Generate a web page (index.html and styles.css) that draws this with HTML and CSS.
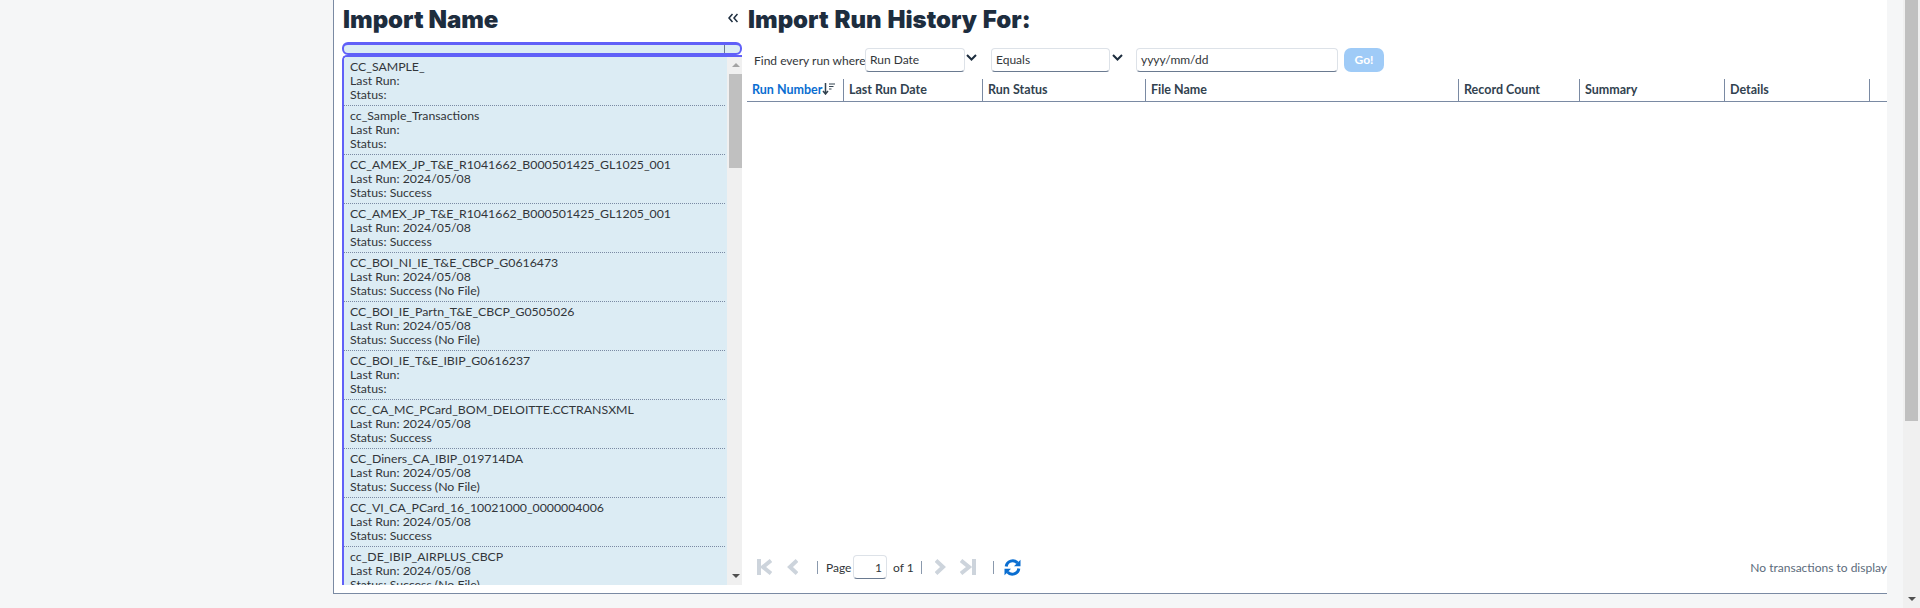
FILE: index.html
```html
<!DOCTYPE html>
<html>
<head>
	<meta charset="utf-8">
	<title>Import Run History</title>
	<link rel="stylesheet" href="styles.css">
</head>
<body>
	<div class="panel">
		<div class="left">
			<div class="pane_title name_title">Import Name</div>
			<div class="search"><span class="tick"></span></div>
			<div class="list_wrap">
				<div class="list">
					<div class="row"><div>CC_SAMPLE_</div><div>Last Run:</div><div>Status:</div></div>
					<div class="row"><div>cc_Sample_Transactions</div><div>Last Run:</div><div>Status:</div></div>
					<div class="row"><div>CC_AMEX_JP_T&amp;E_R1041662_B000501425_GL1025_001</div><div>Last Run: 2024/05/08</div><div>Status: Success</div></div>
					<div class="row"><div>CC_AMEX_JP_T&amp;E_R1041662_B000501425_GL1205_001</div><div>Last Run: 2024/05/08</div><div>Status: Success</div></div>
					<div class="row"><div>CC_BOI_NI_IE_T&amp;E_CBCP_G0616473</div><div>Last Run: 2024/05/08</div><div>Status: Success (No File)</div></div>
					<div class="row"><div>CC_BOI_IE_Partn_T&amp;E_CBCP_G0505026</div><div>Last Run: 2024/05/08</div><div>Status: Success (No File)</div></div>
					<div class="row"><div>CC_BOI_IE_T&amp;E_IBIP_G0616237</div><div>Last Run:</div><div>Status:</div></div>
					<div class="row"><div>CC_CA_MC_PCard_BOM_DELOITTE.CCTRANSXML</div><div>Last Run: 2024/05/08</div><div>Status: Success</div></div>
					<div class="row"><div>CC_Diners_CA_IBIP_019714DA</div><div>Last Run: 2024/05/08</div><div>Status: Success (No File)</div></div>
					<div class="row"><div>CC_VI_CA_PCard_16_10021000_0000004006</div><div>Last Run: 2024/05/08</div><div>Status: Success</div></div>
					<div class="row"><div>cc_DE_IBIP_AIRPLUS_CBCP</div><div>Last Run: 2024/05/08</div><div>Status: Success (No File)</div></div>
				</div>
				<div class="scroll small">
					<span class="arrow up"></span>
					<span class="thumb"></span>
					<span class="arrow down"></span>
				</div>
			</div>
		</div>
		<div class="right">
			<div class="title_row">
				<svg class="collapse" width="10" height="10" viewBox="0 0 10 10"><path d="M4.500 1 1 5l3.500 4M9.500 1 6 5l3.500 4" fill="none" stroke="#1d2d3e" stroke-width="1.500"/></svg>
				<div class="pane_title history_title">Import Run History For:</div>
			</div>
			<div class="filter">
				<span class="find">Find every run where</span>
				<span class="field f1">Run Date</span>
				<svg class="chev" width="11" height="7" viewBox="0 0 11 7"><path d="M1 1 5.500 5.500 10 1" fill="none" stroke="#1d2d3e" stroke-width="2"/></svg>
				<span class="field f2">Equals</span>
				<svg class="chev c_two" width="11" height="7" viewBox="0 0 11 7"><path d="M1 1 5.500 5.500 10 1" fill="none" stroke="#1d2d3e" stroke-width="2"/></svg>
				<span class="field f3">yyyy/mm/dd</span>
				<span class="go">Go!</span>
			</div>
			<div class="grid_head">
				<div class="col c1 sorted">Run Number<svg class="sort" width="13" height="12" viewBox="0 0 13 12"><path d="M3.500 0v10.500M1 8l2.500 3L6 8" fill="none" stroke="#32424f" stroke-width="1.500"/><path d="M7 1h6M7 3.500h4.500M7 6h2.500" fill="none" stroke="#32424f" stroke-width="1"/></svg></div>
				<div class="col c2">Last Run Date</div>
				<div class="col c3">Run Status</div>
				<div class="col c4">File Name</div>
				<div class="col c5">Record Count</div>
				<div class="col c6">Summary</div>
				<div class="col c7">Details</div>
			</div>
			<div class="grid_body"></div>
			<div class="pager">
				<svg class="p1" width="15" height="16" viewBox="0 0 15 16"><path d="M2 0v16M14 1.500 6 8l8 6.500" fill="none" stroke="#cdd4dc" stroke-width="4"/></svg>
				<svg class="p2" width="11" height="16" viewBox="0 0 11 16"><path d="M10 1.500 3 8l7 6.500" fill="none" stroke="#cdd4dc" stroke-width="4"/></svg>
				<span class="sep s1"></span>
				<span class="pg_text pg_label">Page</span>
				<span class="pg_input">1</span>
				<span class="pg_text of">of 1</span>
				<span class="sep"></span>
				<svg class="p3" width="11" height="16" viewBox="0 0 11 16"><path d="M1 1.500 8 8l-7 6.500" fill="none" stroke="#cdd4dc" stroke-width="4"/></svg>
				<svg class="p4" width="16" height="16" viewBox="0 0 16 16"><path d="M14 0v16M1 1.500 9 8l-8 6.500" fill="none" stroke="#cdd4dc" stroke-width="4"/></svg>
				<span class="sep s3"></span>
				<svg class="refresh" width="17" height="17" viewBox="0 0 17 17"><path d="M2.200 7.500A6.500 6.500 0 0 1 13.500 4M14.800 9.500A6.500 6.500 0 0 1 3.500 13" fill="none" stroke="#0a6ed1" stroke-width="3"/><path d="M16.500 .8v6.500h-6.500zM.5 16.200V9.700h6.500z" fill="#0a6ed1"/></svg>
				<span class="no_data">No transactions to display</span>
			</div>
		</div>
	</div>
	<div class="scroll page">
		<span class="thumb"></span>
		<span class="arrow down"></span>
	</div>
</body>
</html>
```

FILE: styles.css
```css
html, body{
	height: 100%;
}
body{
	margin: 0;
	overflow: hidden;
	display: flex;
	background-color: #f5f6f7;
	font-family: Lato, "Noto Sans", Arial, sans-serif;
	font-size: 12.3px;
	color: #32363a;
}
.panel{
	width: 1554px;
	height: 594px;
	margin-left: 333px;
	margin-right: 16px;
	flex: none;
	display: flex;
	box-sizing: border-box;
	padding-left: 8px;
	background-color: #fff;
	border-left: 1px solid #7a8aa3;
	border-bottom: 1px solid #7a8aa3;
}
.left{
	width: 400px;
	flex: none;
}
.right{
	width: 1140px;
	margin-left: 5px;
	flex: none;
	display: flex;
	flex-direction: column;
}
.pane_title{
	height: 42px;
	line-height: 39px;
	font-family: Inter, Arial, sans-serif;
	font-size: 24px;
	font-weight: 900;
	color: #1d2d3e;
}
.name_title{
	padding-left: 1px;
}
.history_title{
	word-spacing: 1px;
}
.search{
	height: 13px;
	box-sizing: border-box;
	border: 2px solid #6060f8;
	border-top-width: 3px;
	border-radius: 6px;
	background-color: #dcecf4;
	position: relative;
}
.tick{
	position: absolute;
	left: 380px;
	top: 0;
	height: 8px;
	border-left: 1px solid #6a7a90;
}
.list_wrap{
	height: 530px;
	box-sizing: border-box;
	display: flex;
	overflow: hidden;
	border-left: 2px solid #6060f8;
	border-top: 2px solid #6060f8;
	border-top-left-radius: 5px;
}
.list{
	width: 383px;
	flex: none;
	background-color: #dcecf4;
	overflow: hidden;
}
.row{
	height: 49px;
	box-sizing: border-box;
	padding: 3px 0 0 6px;
	margin-right: 2px;
	line-height: 14px;
	white-space: nowrap;
	border-bottom: 1px dotted #7a8aa3;
}
.scroll{
	display: flex;
	flex-direction: column;
	flex: none;
	background-color: #f0f0f0;
}
.scroll.small{
	width: 15px;
}
.scroll.page{
	width: 17px;
	height: 100%;
}
.thumb{
	background-color: #c0c0c0;
	height: 94px;
}
.small .thumb{
	margin-left: 2px;
}
.page .thumb{
	height: 421px;
	margin: 0 2px;
}
.arrow{
	height: 17px;
	flex: none;
	position: relative;
}
.small .arrow{
	margin-left: 2px;
}
.down{
	margin-top: auto;
}
.arrow::after{
	content: "";
	position: absolute;
	left: 50%;
	margin-left: -4px;
	top: 6px;
	border-left: 4px solid transparent;
	border-right: 4px solid transparent;
}
.up::after{
	border-bottom: 4px solid #a3a3a3;
}
.down::after{
	border-top: 4px solid #505050;
}
.title_row{
	display: flex;
	align-items: flex-start;
	height: 42px;
}
.collapse{
	margin: 13px 10px 0 -19px;
	flex: none;
}
.filter{
	height: 24px;
	display: flex;
	align-items: center;
	margin: 6px 0 7px;
	font-size: 12px;
}
.find{
	margin-left: 7px;
	width: 111px;
	white-space: nowrap;
}
.field{
	height: 24px;
	box-sizing: border-box;
	padding-left: 4px;
	line-height: 22px;
	border: 1px solid #dde2e8;
	border-bottom-color: #6a7a90;
	border-radius: 4px;
}
.f1{
	width: 100px;
}
.f2{
	width: 119px;
}
.f3{
	width: 202px;
}
.chev{
	margin: 0 14px 5px 1px;
	flex: none;
}
.c_two{
	margin: 0 13px 5px 2px;
}
.go{
	margin-left: 6px;
	width: 40px;
	height: 24px;
	line-height: 24px;
	text-align: center;
	border-radius: 7px;
	background-color: #9fcbf7;
	color: #fff;
	font-size: 12px;
	font-weight: 700;
}
.grid_head{
	height: 23px;
	box-sizing: border-box;
	display: flex;
	border-bottom: 1px solid #7a8aa3;
	font-weight: 700;
	font-size: 12.5px;
	color: #32424f;
}
.col{
	box-sizing: border-box;
	padding: 0 0 2px 5px;
	border-right: 1px solid #7a8aa3;
	white-space: nowrap;
	display: flex;
	align-items: center;
}
.sorted{
	color: #0a6ed1;
}
.sort{
	flex: none;
}
.c1{ width: 97px; }
.c2{ width: 139px; }
.c3{ width: 163px; }
.c4{ width: 313px; }
.c5{ width: 121px; }
.c6{ width: 145px; }
.c7{ width: 145px; }
.grid_body{
	flex: 1;
}
.pager{
	height: 48px;
	flex: none;
	display: flex;
	align-items: center;
	padding-left: 10px;
	padding-bottom: 4px;
	box-sizing: border-box;
	font-size: 12px;
}
.pg_text{
	white-space: nowrap;
}
.pg_label{
	width: 27px;
}
.pg_input{
	width: 34px;
	height: 24px;
	box-sizing: border-box;
	text-align: right;
	padding-right: 4px;
	line-height: 23px;
	border: 1px solid #dde2e8;
	border-bottom-color: #6a7a90;
	border-radius: 4px;
}
.of{
	margin-left: 6px;
	width: 28px;
}
.p2{
	margin-left: 15px;
}
.p3{
	margin-left: 13px;
}
.p4{
	margin-left: 14px;
}
.sep{
	height: 13px;
	border-left: 1px solid #8a99ad;
}
.s1{
	margin: 0 8px 0 19px;
}
.s3{
	margin: 0 10px 0 17px;
}
.no_data{
	margin-left: auto;
	color: #5c6b7c;
	white-space: nowrap;
}
```
